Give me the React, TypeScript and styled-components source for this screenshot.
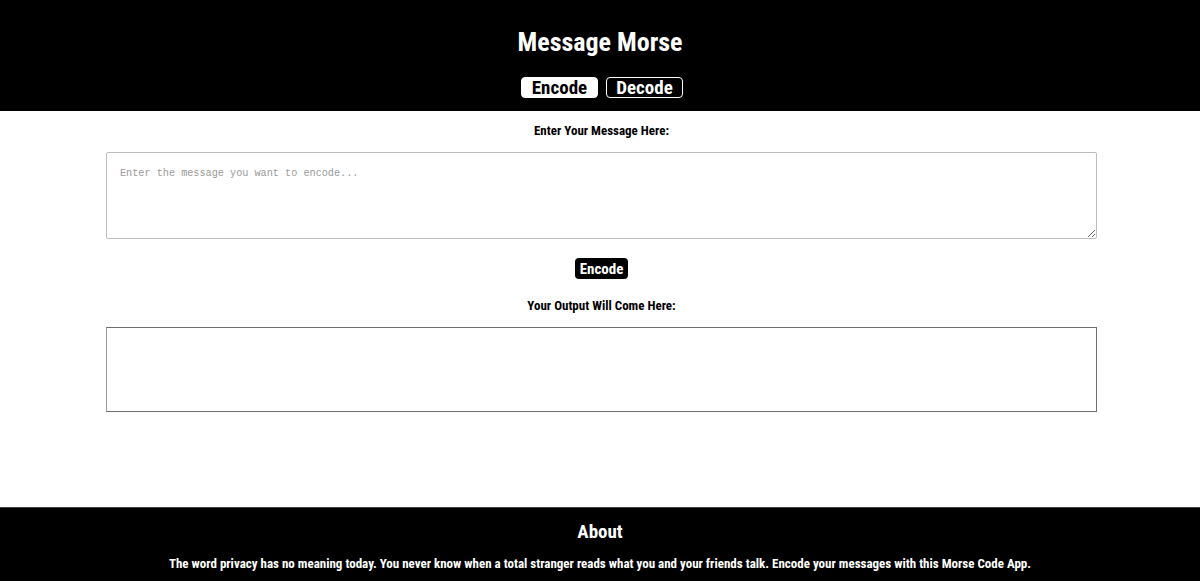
import styled, {createGlobalStyle} from "styled-components";
import React, {useState} from "react";

const GlobalStyle = createGlobalStyle`
  html, body {
    margin: 0;
    padding: 0;
    background: #fff;
    font-family: "Liberation Sans Narrow", "Roboto Condensed", "Liberation Sans", sans-serif;
  }
`
const Page = styled.div`
  display: flex;
  flex-direction: column;
  min-height: 581px;
`
const Header = styled.header`
  background: #000;
  color: #fff;
  height: 111px;
  display: flex;
  flex-direction: column;
  align-items: center;
  box-sizing: border-box;
  padding-top: 27px;
`
const Title = styled.h1`
  margin: 0;
  font-size: 26px;
  font-weight: 700;
  line-height: 30px;
`
const Tabs = styled.div`
  display: flex;
  gap: 8px;
  margin-top: 20px;
  padding-left: 4px;
`
const Tab = styled.button<{ $active?: boolean }>`
  font-family: inherit;
  font-weight: 700;
  font-size: 19px;
  height: 21px;
  width: 77px;
  padding: 0;
  line-height: 17px;
  border-radius: 4px;
  border: 1px solid #fff;
  background: ${p => p.$active ? "#fff" : "#000"};
  color: ${p => p.$active ? "#000" : "#fff"};
  cursor: pointer;
`
const Main = styled.main`
  flex: 1;
  display: flex;
  flex-direction: column;
  align-items: center;
  padding: 0 103px 0 106px;
`
const Label = styled.label<{ $top?: number }>`
  margin-top: ${p => p.$top ?? 0}px;
  font-size: 13px;
  font-weight: 700;
  color: #000;
  line-height: 16px;
`
const InputBox = styled.textarea`
  box-sizing: border-box;
  width: 100%;
  height: 87px;
  margin-top: 13px;
  padding: 15px 13px;
  border: 1px solid #bdbdbd;
  border-radius: 2px;
  font-family: "Liberation Mono", monospace;
  font-size: 10.2px;
  resize: vertical;
  outline: none;

  &::placeholder {
    color: #9a9a9a;
  }
`
const ActionButton = styled.button`
  margin: 19px 0 19px;
  background: #000;
  color: #fff;
  border: none;
  border-radius: 4px;
  font-family: inherit;
  font-weight: 700;
  font-size: 15px;
  height: 21px;
  width: 53px;
  padding: 0;
  cursor: pointer;
`
const OutputBox = styled.div`
  box-sizing: border-box;
  width: 100%;
  height: 85px;
  margin-top: 13px;
  border: 1px solid #6e6e6e;
  border-left-color: #9a9a9a;
  padding: 10px;
  font-family: "Liberation Mono", monospace;
  font-size: 12px;
  white-space: pre-wrap;
`
const Footer = styled.footer`
  background: #000;
  color: #fff;
  height: 74px;
  margin-top: 95px;
  border-top: 1px solid #444;
  display: flex;
  flex-direction: column;
  align-items: center;
  box-sizing: border-box;
  padding-top: 12px;
`
const FooterTitle = styled.h2`
  margin: 0;
  font-size: 19px;
  line-height: 24px;
  font-weight: 700;
`
const FooterText = styled.p`
  margin: 12px 0 0;
  font-size: 13px;
  font-weight: 700;
  line-height: 16px;
`

const MORSE: Record<string, string> = {
    a: ".-", b: "-...", c: "-.-.", d: "-..", e: ".", f: "..-.", g: "--.", h: "....",
    i: "..", j: ".---", k: "-.-", l: ".-..", m: "--", n: "-.", o: "---", p: ".--.",
    q: "--.-", r: ".-.", s: "...", t: "-", u: "..-", v: "...-", w: ".--", x: "-..-",
    y: "-.--", z: "--..", "0": "-----", "1": ".----", "2": "..---", "3": "...--",
    "4": "....-", "5": ".....", "6": "-....", "7": "--...", "8": "---..", "9": "----.",
}

export default function App() {
    const [mode, setMode] = useState<"encode" | "decode">("encode")
    const [text, setText] = useState("")
    const [output, setOutput] = useState("")

    const onRun = () => {
        if (mode === "encode") {
            setOutput(text.toLowerCase().split("").map(c => c === " " ? "/" : MORSE[c] ?? "").join(" "))
        } else {
            const rev = Object.fromEntries(Object.entries(MORSE).map(([k, v]) => [v, k]))
            setOutput(text.trim().split(" ").map(c => c === "/" ? " " : rev[c] ?? "").join(""))
        }
    }

    return <Page>
        <GlobalStyle/>
        <Header>
            <Title>Message Morse</Title>
            <Tabs>
                <Tab $active={mode === "encode"} onClick={() => setMode("encode")}>Encode</Tab>
                <Tab $active={mode === "decode"} onClick={() => setMode("decode")}>Decode</Tab>
            </Tabs>
        </Header>
        <Main>
            <Label $top={12}>Enter Your Message Here:</Label>
            <InputBox
                value={text}
                onChange={(e: React.ChangeEvent<HTMLTextAreaElement>) => setText(e.target.value)}
                placeholder={mode === "encode" ? "Enter the message you want to encode..." : "Enter the morse code you want to decode..."}
            />
            <ActionButton onClick={onRun}>{mode === "encode" ? "Encode" : "Decode"}</ActionButton>
            <Label>Your Output Will Come Here:</Label>
            <OutputBox>{output}</OutputBox>
        </Main>
        <Footer>
            <FooterTitle>About</FooterTitle>
            <FooterText>
                The word privacy has no meaning today. You never know when a total stranger reads what you and your friends talk. Encode your messages with this Morse Code App.
            </FooterText>
        </Footer>
    </Page>
}
